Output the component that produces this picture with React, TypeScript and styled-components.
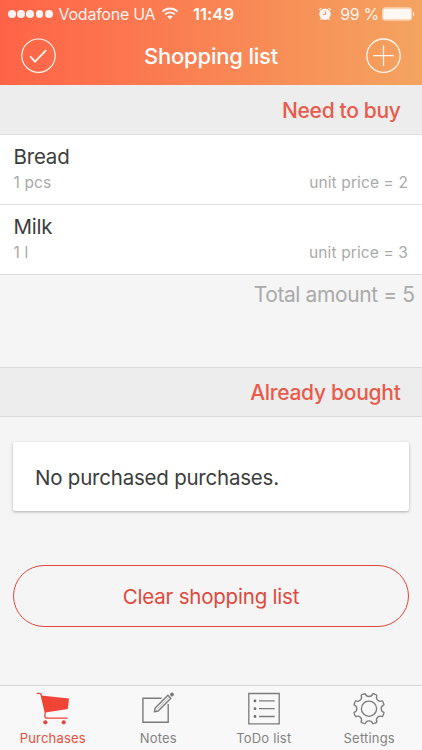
import React from "react";
import styled, { createGlobalStyle } from "styled-components";

const GlobalStyle = createGlobalStyle`
  * { box-sizing: border-box; }
  html, body { margin: 0; padding: 0; }
  body { background: #f5f5f5; font-family: Inter, "Liberation Sans", sans-serif; }
`;

const Screen = styled.div`
  display: flex;
  flex-direction: column;
  width: 422px;
  height: 750px;
  overflow: hidden;
  background: #f5f5f5;
  color: #3c3c3c;
`;

const Label = styled.span<{ $size: number; $track?: number; $weight?: number }>`
  font-size: ${(p) => p.$size}px;
  letter-spacing: ${(p) => p.$track ?? 0}px;
  font-weight: ${(p) => p.$weight ?? 400};
  white-space: pre;
`;

const Header = styled.header`
  flex: none;
  height: 85px;
  background: linear-gradient(90deg, #ff6347 0%, #f4a460 100%);
  color: #fff;
`;

const StatusBar = styled.div`
  display: grid;
  grid-template-columns: 185px 1fr auto;
  align-items: center;
  height: 28px;
  padding: 0 7px 0 8px;
`;

const StatusSide = styled.div`
  display: flex;
  align-items: center;
  opacity: 0.92;
`;

const Signal = styled.div`
  display: flex;
  gap: 1.4px;
  margin-right: 6px;
`;

const Dot = styled.i`
  width: 7.8px;
  height: 7.8px;
  border-radius: 50%;
  background: #fff;
`;

const Carrier = styled.div`
  width: 102px;
`;

const Percent = styled.div`
  margin: 0 3px 0 8px;
`;

const TitleBar = styled.div`
  display: flex;
  align-items: center;
  justify-content: space-between;
  height: 56px;
  padding: 0 21px;
`;

const IconButton = styled.button`
  display: flex;
  padding: 0;
  border: 0;
  background: none;
  color: #fff5ef;
`;

const SectionTitle = styled.h2<{ $ruled?: boolean }>`
  flex: none;
  display: flex;
  align-items: center;
  justify-content: flex-end;
  height: 50px;
  margin: 0;
  padding: 1px 21.5px 0 0;
  background: #ededed;
  border-top: ${(p) => (p.$ruled ? "1px solid #dcdcdc" : "0")};
  border-bottom: 1px solid #dcdcdc;
  color: #e95a4a;
`;

const Item = styled.div`
  flex: none;
  display: flex;
  flex-direction: column;
  height: 70px;
  padding: 9px 14px 0 13.5px;
  background: #fff;
  border-bottom: 1.5px solid #dedede;
`;

const ItemName = styled.div`
  height: 26px;
  line-height: 26px;
`;

const ItemMeta = styled.div`
  display: flex;
  justify-content: space-between;
  height: 25px;
  line-height: 25px;
  color: #aaa;
`;

const Total = styled.div`
  flex: none;
  height: 92px;
  padding: 7px 7.5px 0 0;
  line-height: 26px;
  text-align: right;
  color: #aaa;
`;

const Card = styled.div`
  flex: none;
  display: flex;
  align-items: center;
  height: 69px;
  margin: 25px 13px 0;
  padding: 2px 22px 0;
  background: #fff;
  border-radius: 2px;
  box-shadow: 0 1px 3px rgba(0, 0, 0, 0.3);
`;

const ClearButton = styled.button`
  flex: none;
  display: flex;
  align-items: center;
  justify-content: center;
  height: 62px;
  margin: 54px 13px 0;
  padding: 0;
  border: 1.3px solid #e0483b;
  border-radius: 31px;
  background: transparent;
  color: #e0483b;
  font-family: inherit;
`;

const TabBar = styled.nav`
  flex: none;
  display: grid;
  grid-template-columns: repeat(4, 1fr);
  height: 65px;
  margin-top: auto;
  background: #f8f8f8;
  border-top: 1.5px solid #d6d6d6;
`;

const Tab = styled.a<{ $active?: boolean }>`
  display: flex;
  flex-direction: column;
  align-items: center;
  gap: 2px;
  padding-top: 6px;
  line-height: 20px;
  color: ${(p) => (p.$active ? "#e8503f" : "#828282")};
`;

const Wifi = () => (
  <svg width="18" height="14" viewBox="0 0 18 14" fill="none" stroke="#fff" strokeWidth="1.9">
    <path d="M1.5 4.7C5.7 .5 12.3 .5 16.5 4.7" />
    <path d="M4.1 7.4C6.9 4.7 11.1 4.7 13.9 7.4" />
    <path d="M9 12.5L6.2 9.6C7.8 8.1 10.2 8.1 11.8 9.6Z" fill="#fff" stroke="none" />
  </svg>
);

const Alarm = () => (
  <svg width="14" height="14" viewBox="0 0 14 14" fill="none">
    <circle cx="7" cy="7.2" r="5.7" fill="#fff" />
    <path d="M1 3.1L3.3 1.1M13 3.1L10.7 1.1M3.4 11.7L2.4 12.9M10.6 11.7L11.6 12.9" stroke="#fff" strokeWidth="1.1" />
    <path d="M7.4 4V7.5H4.8" stroke="#f8905a" strokeWidth="1" />
  </svg>
);

const Battery = () => (
  <svg width="33" height="14" viewBox="0 0 33 14" fill="none">
    <rect x="0.6" y="0.8" width="29" height="12.4" rx="2.4" stroke="#fff" strokeOpacity=".65" strokeWidth="1" />
    <rect x="1.2" y="1.5" width="27.8" height="11" rx="1.5" fill="#fff" />
    <path d="M31 4.8C32.7 5.5 32.7 8.5 31 9.2Z" fill="#fff" />
  </svg>
);

const CircleCheck = () => (
  <svg width="35" height="36" viewBox="0 0 35 36" fill="none" stroke="currentColor">
    <circle cx="17.5" cy="17.7" r="16.7" strokeWidth="1.2" />
    <path d="M9.2 18.4L14 23.7L25.2 12.2" strokeWidth="1.9" />
  </svg>
);

const CirclePlus = () => (
  <svg width="35" height="36" viewBox="0 0 35 36" fill="none" stroke="currentColor" strokeWidth="1.3">
    <circle cx="17.5" cy="17.7" r="16.7" />
    <path d="M17.5 7.4V28M7.2 17.7H27.8" />
  </svg>
);

const Cart = () => (
  <svg width="34" height="34" viewBox="0 0 34 34" fill="none">
    <path d="M1.2 1.3H3.8Q4.8 1.3 5.1 2.5L9.3 20.3L8.8 23.7Q8.8 26.2 11 26.2H31" stroke="#ee4436" strokeWidth="1.3" strokeLinecap="round" />
    <path d="M5.2 3.5L33 6.5L31.8 17L9.2 20.5Z" fill="#f04436" />
    <circle cx="9.3" cy="30.3" r="2.1" fill="#e8483b" />
    <circle cx="27.7" cy="30.3" r="2.1" fill="#e8483b" />
  </svg>
);

const Compose = () => (
  <svg width="34" height="34" viewBox="0 0 34 34" fill="none" stroke="#7b7b7b" strokeWidth="1.4">
    <path d="M20.6 6.2H1.9V30.2H27.2V12" />
    <path d="M14.2 16L26.9 3.3L29.9 6.3L17.2 19L13.4 19.8Z" strokeWidth="1.4" strokeLinejoin="round" />
    <path d="M16 17.3L28.2 5.1" strokeWidth=".5" />
    <circle cx="31" cy="2.5" r="1.9" fill="#7b7b7b" stroke="none" />
  </svg>
);

const ListBox = () => (
  <svg width="34" height="34" viewBox="0 0 34 34" fill="none" stroke="#7b7b7b" strokeWidth="1.3">
    <path d="M1.8 1.5H32.2V31.8H1.8Z" />
    <path d="M12 8.9H27.7M12 16.7H27.7M12 24.5H27.7" />
    <g fill="#6f6f6f" stroke="none">
      <circle cx="8" cy="8.9" r="1.4" />
      <circle cx="8" cy="16.7" r="1.4" />
      <circle cx="8" cy="24.5" r="1.4" />
    </g>
  </svg>
);

const polar = (deg: number, r: number) => {
  const a = (deg * Math.PI) / 180;
  return `${(17 + r * Math.sin(a)).toFixed(2)} ${(16.7 - r * Math.cos(a)).toFixed(2)}`;
};

const gearPath =
  `M${polar(14, 15.4)}` +
  Array.from({ length: 8 }, (_, i) => {
    const start = i * 45;
    return `Q${polar(start + 17, 15.9)} ${polar(start + 22.5, 15.5)}Q${polar(start + 28, 15.9)} ${polar(start + 31, 15.4)}A3.9 3.9 0 0 0 ${polar(start + 59, 15.4)}`;
  }).join("") +
  "Z";

const Gear = () => (
  <svg width="34" height="34" viewBox="0 0 34 34" fill="none" stroke="#7b7b7b" strokeWidth="1.3" strokeLinejoin="round">
    <path d={gearPath} />
    <circle cx="17" cy="16.7" r="7.6" />
  </svg>
);

const items = [
  { name: "Bread", amount: "1 pcs", price: 2 },
  { name: "Milk", amount: "1 l", price: 3 },
];

const tabs = [
  { name: "Purchases", Icon: Cart, active: true },
  { name: "Notes", Icon: Compose },
  { name: "ToDo list", Icon: ListBox },
  { name: "Settings", Icon: Gear },
];

export default function App() {
  return (
    <>
      <GlobalStyle />
      <Screen>
        <Header>
          <StatusBar>
            <StatusSide>
              <Signal>
                {[0, 1, 2, 3, 4].map((n) => (
                  <Dot key={n} />
                ))}
              </Signal>
              <Carrier><Label $size={16} $track={-0.25}>Vodafone UA</Label></Carrier>
              <Wifi />
            </StatusSide>
            <Label $size={16.5} $weight={600} $track={0.05}>11:49</Label>
            <StatusSide>
              <Alarm />
              <Percent><Label $size={16} $track={-0.3}>99 %</Label></Percent>
              <Battery />
            </StatusSide>
          </StatusBar>
          <TitleBar>
            <IconButton aria-label="Select all"><CircleCheck /></IconButton>
            <Label $size={22} $weight={500} $track={-0.2}>Shopping list</Label>
            <IconButton aria-label="Add"><CirclePlus /></IconButton>
          </TitleBar>
        </Header>
        <SectionTitle>
          <Label $size={21} $weight={500} $track={-0.33}>Need to buy</Label>
        </SectionTitle>
        {items.map((item) => (
          <Item key={item.name}>
            <ItemName><Label $size={20.5} $track={-0.2}>{item.name}</Label></ItemName>
            <ItemMeta>
              <Label $size={15.5} $track={0.12}>{item.amount}</Label>
              <Label $size={15.5} $track={0.12}>{`unit price = ${item.price}`}</Label>
            </ItemMeta>
          </Item>
        ))}
        <Total><Label $size={21} $track={-0.4}>Total amount = 5</Label></Total>
        <SectionTitle $ruled>
          <Label $size={21} $weight={500} $track={-0.28}>Already bought</Label>
        </SectionTitle>
        <Card><Label $size={20.5} $track={-0.22}>No purchased purchases.</Label></Card>
        <ClearButton><Label $size={20.5} $track={-0.2}>Clear shopping list</Label></ClearButton>
        <TabBar>
          {tabs.map(({ name, Icon, active }) => (
            <Tab key={name} $active={active}>
              <Icon />
              <Label $size={13} $track={0.2}>{name}</Label>
            </Tab>
          ))}
        </TabBar>
      </Screen>
    </>
  );
}
